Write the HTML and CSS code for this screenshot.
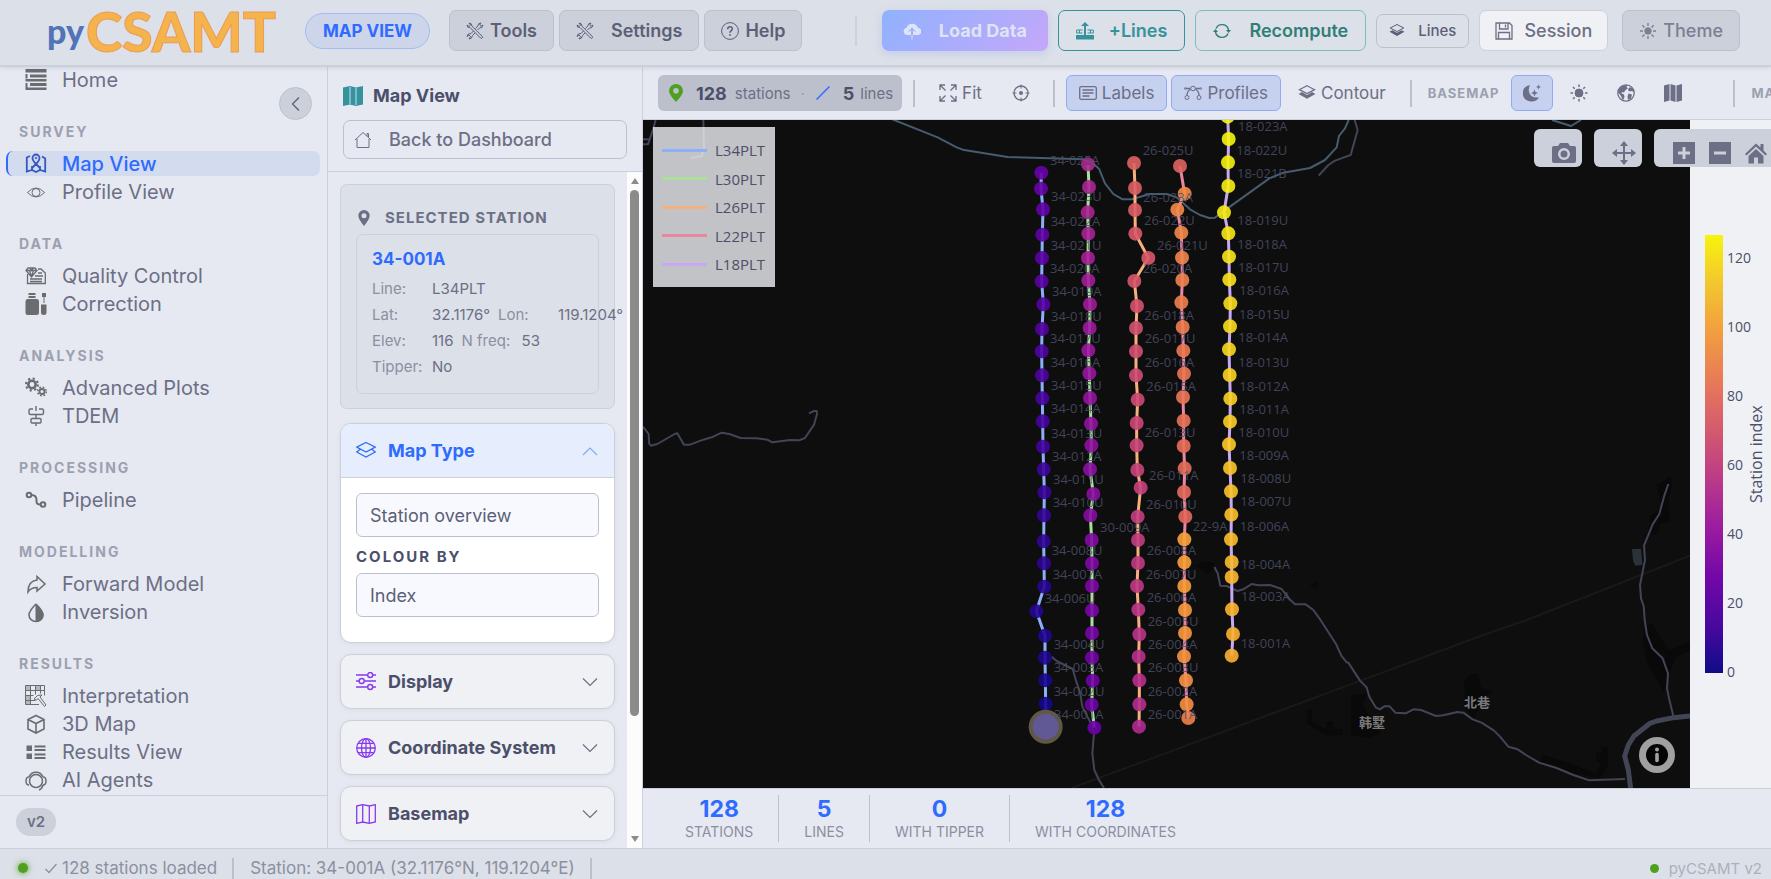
FILE: index.html
```html
<!DOCTYPE html>
<html lang="en">
<head>
<meta charset="utf-8">
<title>pyCSAMT – Map View</title>
<link rel="stylesheet" href="styles.css">
</head>
<body>
<div class="app">
  <header class="topbar">
    <a class="logo" href="#"><span class="logo-py">py</span><span class="logo-name">CSAMT</span></a>
    <span class="view-badge">MAP VIEW</span>
    <div class="menu">
      <button class="btn btn-menu"><svg class="i18" viewBox="0 0 18 18"><path d="M4 5.500 14.500 16q1 .8 1.700 0t0-1.700L6 4.200Q6 1 3 1L4.500 3 3.200 4.500 1 3q0 3 3 2.500M11.500 8l2-2q3 .5 3.500-3l-2 1.300L13.700 3 15 1q-3 0-3.200 3L9.500 6.500M7.500 9 5 11.500Q1.500 11 1 14.500L3 13l1.500 1.500L3 17q3 0 3.500-3.500L9 11"/></svg>Tools</button>
      <button class="btn btn-menu btn-wide"><svg class="i18" viewBox="0 0 18 18"><path d="M4 5.500 14.500 16q1 .8 1.700 0t0-1.700L6 4.200Q6 1 3 1L4.500 3 3.200 4.500 1 3q0 3 3 2.500M11.500 8l2-2q3 .5 3.500-3l-2 1.300L13.700 3 15 1q-3 0-3.200 3L9.500 6.500M7.500 9 5 11.500Q1.500 11 1 14.500L3 13l1.500 1.500L3 17q3 0 3.500-3.500L9 11"/></svg>Settings</button>
      <button class="btn btn-menu"><svg class="i18" viewBox="0 0 18 18"><circle cx="9" cy="9" r="8.400"/><path stroke-width="1.500" d="M6.600 7.200Q6.800 4.800 9 4.800t2.300 2q0 1.300-1.400 2.200-.9.600-.9 1.700"/><path stroke-width="1.800" d="M9 12.300v1.500"/></svg>Help</button>
    </div>
    <span class="topbar-sep"></span>
    <div class="actions">
      <button class="btn btn-load"><svg class="i18" viewBox="0 0 18 18"><path fill="currentColor" stroke="none" d="M4.500 13H8V8L6 10 5.300 9.300 9 5.600l3.700 3.700L12 10l-2-2v5h4.500A3.500 3.500 0 0 0 15 6 6 6 0 0 0 3.600 5.700 3.700 3.700 0 0 0 4.500 13M8.500 13h1v4.500h-1z"/></svg>Load Data</button>
      <button class="btn btn-lines"><svg class="i18" viewBox="0 0 18 18"><path fill="currentColor" stroke="none" d="M0 13h18v4.500H0zM8 4h2v9H8zM5 4l4-4 4 4z"/><path d="M6.500 8H.7v3h5.800M11.500 8h5.800v3h-5.800M3.500 8v3M14.500 8v3"/></svg>+Lines</button>
      <button class="btn btn-recompute"><svg class="i18" viewBox="0 0 18 18"><path stroke-width="1.400" d="M3 6.500A6.600 6.600 0 0 1 15.500 8M15 11.500A6.600 6.600 0 0 1 2.500 10"/><path fill="currentColor" stroke="none" d="M0 10h5L2.500 7zM13 8h5l-2.500 3z"/></svg>Recompute</button>
      <button class="btn btn-small"><svg class="i16" viewBox="0 0 16 16"><path d="M8 1.500 14.800 5 8 8.500 1.200 5z"/><path fill="currentColor" stroke="none" d="m3.500 7.200-3 1.600L8 13l7.500-4.200-3-1.600L8 9.700z"/></svg>Lines</button>
      <button class="btn btn-session"><svg class="i18" viewBox="0 0 18 18"><path stroke-width="1.300" d="M1 1h13.500L17 3.500V17H1zM4.500 1v6h8.500V1M3.500 17v-6.500h11V17M10.500 2.500v3"/></svg>Session</button>
      <button class="btn btn-theme"><svg class="i18" viewBox="0 0 18 18"><circle cx="9" cy="9" r="3.200" fill="currentColor"/><path stroke-width="1.400" d="M9 1v3M9 14v3M1 9h3M14 9h3M3.300 3.300l2.200 2.200M12.500 12.500l2.200 2.200M3.300 14.700l2.200-2.200M12.500 5.500l2.200-2.200"/></svg>Theme</button>
    </div>
  </header>

  <div class="body">
    <nav class="sidebar" aria-label="Main">
      <button class="collapse" aria-label="Collapse sidebar"><svg class="i16" viewBox="0 0 16 16"><path stroke-width="1.300" d="M11 1.500 4.500 8 11 14.500"/></svg></button>
      <div class="nav-scroll">
        <a class="nav-item" href="#"><svg class="nav-i" viewBox="0 0 22 22"><path stroke="none" fill="currentColor" d="M.5 0h21v3.500H.5zM.5 5h2v4.500H.5zM5 5.500h16.500v3H5zM.5 10h21v2.500H.5zM.5 14h2v5H.5zM5 14h16.500v3H5zM.5 18.500h21V21H.5z"/></svg>Home</a>

        <h2 class="nav-title">SURVEY</h2>
        <a class="nav-item active" href="#"><svg class="nav-i" viewBox="0 0 22 22"><path stroke-width="1.800" d="M5 3 1.800 4.500v14L7 17l4 2 4-2 5.200 1.500V5.500L17 3.500M7 13v4M15 13v4M11 12v-1M11 11Q7.500 7.500 7.500 5a3.500 3.500 0 0 1 7 0q0 2.500-3.500 6l4 4M11 11l-4 4"/><circle cx="11" cy="5" r=".8"/></svg>Map View</a>
        <a class="nav-item" href="#"><svg class="nav-i" viewBox="0 0 22 22"><path d="M2.500 11.500Q11 2.500 19.500 11.500 11 20.500 2.500 11.500"/><circle cx="11" cy="11.500" r="4"/></svg>Profile View</a>

        <h2 class="nav-title">DATA</h2>
        <a class="nav-item" href="#"><svg class="nav-i" viewBox="0 0 22 22"><path stroke-width="1.300" d="M2.500 9v9.500h17.800V8L16 4h-3M3 3h7l2 2.500L6.500 12 1 5.500zM1 5.500h11M4.500 5.500l2 6 2-6M5 3l1.500 2.500L8.500 3M10 11h8M5 14h12M5 16.500h12M13 8h4"/></svg>Quality Control</a>
        <a class="nav-item" href="#"><svg class="nav-i" viewBox="0 0 22 22"><path stroke="none" fill="currentColor" d="M3.500 0h7v2h-7zM3.500 3h7v2h-7zM2.500 6h9q2.500 0 2.500 2.500v11q0 2.500-2.500 2.500h-9Q.5 22 .5 19.500v-11Q.5 6 2.500 6M17 0h4v4h-1.500v6h-1V4H17zM16 11.500h5.500v8q0 2.500-2.700 2.500T16 19.500z"/></svg>Correction</a>

        <h2 class="nav-title">ANALYSIS</h2>
        <a class="nav-item" href="#"><svg class="nav-i" viewBox="0 0 22 22"><circle cx="7" cy="7.500" r="3.700" stroke-width="2.600"/><circle cx="7" cy="7.500" r="6" stroke-width="2" stroke-dasharray="2.200 2.500"/><circle cx="17" cy="14.500" r="2.500" stroke-width="1.800"/><circle cx="17" cy="14.500" r="4.300" stroke-width="1.600" stroke-dasharray="1.700 1.700"/></svg>Advanced Plots</a>
        <a class="nav-item" href="#"><svg class="nav-i" viewBox="0 0 22 22"><path stroke-width="1.400" d="M11 1v5M11 9.500v4M11 18v3M8 4H5.500Q4 4 4 5.500V8q0 1.500 1.500 1.500H17q1.500 0 1.500-1.500V5.500Q18.500 4 17 4h-3M7 13.500h8q1 0 1 1V17q0 1-1 1H7q-1 0-1-1v-2.500q0-1 1-1z"/></svg>TDEM</a>

        <h2 class="nav-title">PROCESSING</h2>
        <a class="nav-item" href="#"><svg class="nav-i" viewBox="0 0 22 22"><g stroke-width="2"><circle cx="4" cy="6" r="2.300"/><circle cx="18" cy="15.500" r="2.300"/><path d="M6.500 6q5 0 5 5v1.500q0 3 4 3"/></g></svg>Pipeline</a>

        <h2 class="nav-title">MODELLING</h2>
        <a class="nav-item" href="#"><svg class="nav-i" viewBox="0 0 22 22"><path stroke-width="1.500" d="M12 7V3.500L20 11l-8 7v-3.500q-6 0-9 4.500Q3 8 12 7z"/></svg>Forward Model</a>
        <a class="nav-item" href="#"><svg class="nav-i" viewBox="0 0 22 22"><path stroke-width="1.600" d="M11 3q-7 7-7 11a7 6.500 0 0 0 14 0q0-4-7-11"/><path fill="currentColor" d="M11 3q7 7 7 11a7 6.500 0 0 1-7 6.500z"/></svg>Inversion</a>

        <h2 class="nav-title">RESULTS</h2>
        <a class="nav-item" href="#"><svg class="nav-i" viewBox="0 0 22 22"><path fill="#b4b6bd" stroke="none" d="M1 1h5v5H1zM11 1h4v5h-4zM6 11H1v8h5z"/><path d="M.5.500h19v10M.5.500v19H14M5.500.500v19M10.500.500v9M15.500.500v8M.5 5.500h19M.5 10.500h8M.5 15.500h10"/><path d="M9 14q3-5 8-4l-2 2 6 8-1.500 1.500-6.500-8q-1 3-4 .5"/></svg>Interpretation</a>
        <a class="nav-item" href="#"><svg class="nav-i" viewBox="0 0 22 22"><path stroke-width="1.600" d="m11 2.500 8 4v9.500l-8 4-8-4V6.500zM3 6.500l8 4 8-4M11 10.500V20"/></svg>3D Map</a>
        <a class="nav-item" href="#"><svg class="nav-i" viewBox="0 0 22 22"><path stroke="none" fill="currentColor" d="M1.500 4.500H7V10H1.500zM1.500 12.500H7V18H1.500zM9.500 4.500h11v2h-11zM9.500 8h11v2h-11zM9.500 12.500h11v2h-11zM9.500 16h11v2h-11z"/></svg>Results View</a>
        <a class="nav-item" href="#"><svg class="nav-i" viewBox="0 0 22 22"><g stroke-width="1.500"><circle cx="11" cy="12" r="6.500"/><path d="M4 8q-3 0-3 4t3 4M18 8q3 0 3 4t-3 4M4 8a7.500 7.500 0 0 1 14 0M18 16q-1 4-4 5"/></g></svg>AI Agents</a>
      </div>
      <div class="nav-foot"><span class="version">v2</span></div>
    </nav>

    <aside class="panel">
      <div class="panel-head">
        <h1 class="panel-title"><svg class="i20" viewBox="0 0 20 20"><path stroke="none" fill="#36929b" d="M0 1.500 7 0l6 1.500L20 0v18.500L13 20l-6-1.500L0 20z"/><path stroke="#9cc9e8" stroke-width="1.400" d="M7 1v17M13 2v17"/></svg>Map View</h1>
        <button class="back"><svg class="i18" viewBox="0 0 18 18"><path d="M1 9 9 1.500 17 9M3 8v8.500h12V8M13 5V2.500h1.500v4"/></svg>Back to Dashboard</button>
      </div>
      <div class="panel-body">
        <div class="panel-list">
          <section class="selected">
            <h2 class="selected-title"><svg class="i16" viewBox="0 0 16 16"><path stroke="none" fill="currentColor" fill-rule="evenodd" d="M8 0a5.700 5.700 0 0 0-5.700 5.800Q2.300 9 8 16q5.700-7 5.700-10.200A5.700 5.700 0 0 0 8 0m0 3.200a2.500 2.500 0 1 1 0 5 2.500 2.500 0 0 1 0-5"/></svg>SELECTED STATION</h2>
            <div class="station">
              <strong class="station-name">34-001A</strong>
              <div class="row"><span class="key">Line:</span><span class="val">L34PLT</span></div>
              <div class="row"><span class="key">Lat:</span><span class="val">32.1176°</span><span class="key">Lon:</span><span class="val">119.1204°</span></div>
              <div class="row"><span class="key">Elev:</span><span class="val">116</span><span class="key">N freq:</span><span class="val">53</span></div>
              <div class="row"><span class="key">Tipper:</span><span class="val">No</span></div>
            </div>
          </section>
          <section class="acc open">
            <button class="acc-head"><svg class="i20" viewBox="0 0 20 20"><path stroke-width="1.300" d="m10 1.500 9.300 4.700L10 11 .7 6.200zM4 8.500.7 11l9.300 5 9.300-5L16 8.500"/></svg><span>Map Type</span><svg class="chev" viewBox="0 0 16 16"><path d="m1 12 7-7 7 7"/></svg></button>
            <div class="acc-body">
              <select class="field" aria-label="Map type"><option>Station overview</option></select>
              <label class="field-label" for="colour">COLOUR BY</label>
              <select class="field" id="colour"><option>Index</option></select>
            </div>
          </section>
          <section class="acc">
            <button class="acc-head"><svg class="i20" viewBox="0 0 20 20"><g stroke-width="1.400"><path d="M0 3h11.500M17 3h3M0 9h3M8.500 9H20M0 15h11.500M17 15h3"/><circle cx="14.200" cy="3" r="2.500"/><circle cx="5.700" cy="9" r="2.500"/><circle cx="14.200" cy="15" r="2.500"/></g></svg><span>Display</span><svg class="chev" viewBox="0 0 16 16"><path d="m1 4.500 7 7 7-7"/></svg></button>
          </section>
          <section class="acc">
            <button class="acc-head"><svg class="i20" viewBox="0 0 20 20"><g stroke-width="1.300"><circle cx="10" cy="10" r="9.300"/><ellipse cx="10" cy="10" rx="4.500" ry="9.300"/><path d="M10 .7v18.600M.7 10h18.600M2.200 5.300h15.600M2.200 14.700h15.600"/></g></svg><span>Coordinate System</span><svg class="chev" viewBox="0 0 16 16"><path d="m1 4.500 7 7 7-7"/></svg></button>
          </section>
          <section class="acc">
            <button class="acc-head"><svg class="i20" viewBox="0 0 20 20"><path stroke-width="1.300" d="m.7 2 6-1.300 6.600 1.300 6-1.300V18l-6 1.300L6.700 18l-6 1.300zM6.700.700V18M13.300 2v17.300"/></svg><span>Basemap</span><svg class="chev" viewBox="0 0 16 16"><path d="m1 4.500 7 7 7-7"/></svg></button>
          </section>
        </div>
        <div class="scroll" aria-hidden="true"><i class="arrow up"></i><i class="thumb"></i><i class="arrow down"></i></div>
      </div>
    </aside>

    <main class="main">
      <div class="toolbar">
        <div class="chip">
          <svg class="i18 pin" viewBox="0 0 18 18"><path stroke="none" fill="#50a020" fill-rule="evenodd" d="M9 0a7 7 0 0 0-7 7q0 3.500 7 11 7-7.500 7-11a7 7 0 0 0-7-7m0 4a2.800 2.800 0 1 1 0 5.600A2.800 2.800 0 0 1 9 4"/></svg>
          <b>128</b><span>stations</span><i>·</i>
          <svg class="i14" viewBox="0 0 14 14"><path stroke="#2f6bff" stroke-width="1.500" d="M.5 13.500 13.500.500"/></svg>
          <b class="num">5</b><span>lines</span>
        </div>
        <span class="tsep"></span>
        <button class="tool tool-fit"><svg class="i18" viewBox="0 0 18 18"><path stroke-width="1.300" d="M6.500 6.500 1 1M1 6V1h5M11.500 6.500 17 1M12 1h5v5M6.500 11.500 1 17M1 12v5h5M11.500 11.500 17 17M17 12v5h-5"/></svg>Fit</button>
        <button class="tool tool-icon" aria-label="Centre"><svg class="i18" viewBox="0 0 18 18"><circle cx="9" cy="9" r="7" stroke-width="1.300"/><circle cx="9" cy="9" r="2" fill="currentColor" stroke="none"/><path d="M9 .5v4M9 13.500v4M.5 9h4M13.500 9h4"/></svg></button>
        <span class="tsep"></span>
        <div class="toggles">
          <button class="tool on"><svg class="i18" viewBox="0 0 18 18"><rect x=".7" y="2.700" width="16.600" height="12.600" rx="1.500" stroke-width="1.300"/><path stroke-width="1.300" d="M3.500 6h11M3.500 9h11M3.500 12h7"/></svg>Labels</button>
          <button class="tool on"><svg class="i18" viewBox="0 0 18 18"><path stroke-width="1.300" d="M2 4.500h4.500M11.500 4.500H16M6.500 5.500Q3 7 3 11.500M11.500 5.500Q15 7 15 11.500"/><circle cx="9" cy="4.500" r="2.300"/><circle cx="3" cy="13.500" r="2"/><circle cx="15" cy="13.500" r="2"/><circle cx="1.200" cy="4.500" r=".8"/><circle cx="16.800" cy="4.500" r=".8"/></svg>Profiles</button>
          <button class="tool"><svg class="i18" viewBox="0 0 16 16"><path d="M8 1.500 14.800 5 8 8.500 1.200 5z"/><path fill="currentColor" stroke="none" d="m3.500 7.200-3 1.600L8 13l7.500-4.200-3-1.600L8 9.700z"/></svg>Contour</button>
        </div>
        <span class="tsep"></span>
        <span class="tlabel">BASEMAP</span>
        <div class="bases">
          <button class="tool tool-icon on" aria-label="Dark"><svg class="i18" viewBox="0 0 18 18"><path stroke="none" fill="currentColor" d="M7 1A8 8 0 0 0 9 17.500q4.500 0 7-4Q7 14.500 5.800 7 5.500 3.500 7 1M11.500 5.500 12.500 8l2.500 1-2.500 1-1 2.500-1-2.500L8 9l2.500-1zM15.500.500l.7 1.800 1.800.7-1.800.7-.7 1.800-.7-1.800L13 3l1.800-.7z"/></svg></button>
          <button class="tool tool-icon" aria-label="Light"><svg class="i18" viewBox="0 0 18 18"><circle cx="9" cy="9" r="4" fill="currentColor"/><path stroke-width="1.500" d="M9 .5v2.500M9 15v2.500M.5 9H3M15 9h2.500M3 3l1.700 1.700M13.300 13.300 15 15M3 15l1.700-1.700M13.300 4.700 15 3"/></svg></button>
          <button class="tool tool-icon" aria-label="Satellite"><svg class="i18" viewBox="0 0 18 18"><circle cx="9" cy="9" r="8.200" stroke-width="1.300"/><path stroke="none" fill="currentColor" d="M3 4q3-3.500 7.500-3l-1 2L11 4.500 8.500 6l-1.500 2.500L5 8l-.5 1.500 2.500 1 .5 2.500-1.500 3.500L4 12 1 8zM12 3.500l3.500.5 1.500 4-2-1-2.500.5L11 6zM11.500 9.500l3.500 1-1 4-3 1.500-.5-3.500z"/></svg></button>
          <button class="tool tool-icon" aria-label="Streets"><svg class="i18" viewBox="0 0 18 18"><path stroke="none" fill="currentColor" d="M0 1.500 5.500 0v16.500L0 18zM6.500 0l5 1.500V18l-5-1.500zM12.500 1.500 18 0v16.500L12.500 18z"/></svg></button>
        </div>
        <span class="tsep"></span>
        <span class="tlabel">MAP</span>
      </div>

      <div class="plot">
        <svg class="map" viewBox="643 120 1047 668" preserveAspectRatio="xMinYMin slice" role="img" aria-label="Station map">
          <rect x="643" y="120" width="1047" height="668" fill="#0e0e0e"/>
          <g id="ground"></g>
          <g id="profiles"></g>
          <g id="labels"></g>
          <g id="points"></g>
        </svg>
        <div class="colorbar">
          <div class="bar"></div>
          <ol class="ticks"><li>120</li><li>100</li><li>80</li><li>60</li><li>40</li><li>20</li><li>0</li></ol>
          <div class="bar-title">Station index</div>
        </div>
        <ul class="legend">
          <li><i class="l34"></i>L34PLT</li><li><i class="l30"></i>L30PLT</li><li><i class="l26"></i>L26PLT</li><li><i class="l22"></i>L22PLT</li><li><i class="l18"></i>L18PLT</li>
        </ul>
        <div class="modebar">
          <div class="group"><button aria-label="Download"><svg viewBox="0 0 24 24"><path fill-rule="evenodd" d="M8 2h8l2 3h4q2 0 2 2v13q0 2-2 2H2q-2 0-2-2V7q0-2 2-2h4zm4 5a6 6 0 1 0 0 12 6 6 0 0 0 0-12m0 2.500a3.500 3.500 0 1 1 0 7 3.500 3.500 0 0 1 0-7"/></svg></button></div>
          <div class="group"><button aria-label="Pan"><svg viewBox="0 0 24 24"><path d="m12 0 4 5h-3v6h6V8l5 4-5 4v-3h-6v6h3l-4 5-4-5h3v-6H5v3l-5-4 5-4v3h6V5H8z"/></svg></button></div>
          <div class="group last"><button aria-label="Zoom in"><svg viewBox="0 0 24 24"><path fill-rule="evenodd" d="M1 1h22v22H1zM10.500 6v4.500H6v3h4.500V18h3v-4.500H18v-3h-4.500V6z"/></svg></button><button aria-label="Zoom out"><svg viewBox="0 0 24 24"><path fill-rule="evenodd" d="M1 1h22v22H1zM6 10.500v3h12v-3z"/></svg></button><button aria-label="Reset view"><svg viewBox="0 0 24 24"><path d="M12 2.500 1 13l1.500 1.500L12 5.500l9.500 9L23 13l-3.500-3.500V3h-3v3.500zM12 8l-7.500 7v7.500h5.500v-6h4v6h5.500V15z"/></svg></button></div>
        </div>
        <button class="info" aria-label="Attribution"><svg viewBox="0 0 36 36"><circle cx="18" cy="18" r="18" fill="#a0a0a0"/><circle cx="18" cy="18" r="11" fill="#050505"/><circle cx="18" cy="12.500" r="2" fill="#a0a0a0"/><path d="M18 17.500v6" stroke="#a0a0a0" stroke-width="3.600" stroke-linecap="round"/></svg></button>
      </div>

      <div class="stats">
        <div class="stat"><b>128</b><span>STATIONS</span></div>
        <div class="stat"><b>5</b><span>LINES</span></div>
        <div class="stat"><b>0</b><span>WITH TIPPER</span></div>
        <div class="stat"><b>128</b><span>WITH COORDINATES</span></div>
      </div>
    </main>
  </div>

  <footer class="status">
    <i class="dot glow"></i>
    <span class="status-msg"><svg class="i14" viewBox="0 0 14 14"><path stroke-width="1.300" d="M1.500 8 5 11.500 12.500 3"/></svg>128 stations loaded</span>
    <span class="status-msg">Station: 34-001A (32.1176°N, 119.1204°E)</span>
    <span class="brand"><i class="dot"></i>pyCSAMT v2</span>
  </footer>
</div>
<script src="map.js"></script>
</body>
</html>
```
FILE: styles.css
```css
* { box-sizing: border-box; }
html, body { height: 100%; }
body { margin: 0; overflow: hidden; font-family: Inter, "Liberation Sans", sans-serif; color: #4c4f69; background: #e6e9f1; }
button, select { font: inherit; color: inherit; cursor: pointer; }
button { margin: 0; border: 1px solid transparent; background: none; }
a { color: inherit; text-decoration: none; }
h1, h2, ol, ul { margin: 0; padding: 0; list-style: none; }
svg { display: block; flex: none; fill: none; stroke: currentColor; }
.i14 { width: 14px; height: 14px; }
.i16 { width: 16px; height: 16px; }
.i18 { width: 18px; height: 18px; }
.i20 { width: 20px; height: 20px; }

.app { height: 100vh; display: flex; flex-direction: column; }

/* Top bar */
.topbar { position: relative; z-index: 2; flex: none; height: 67px; padding: 0 31px 4px 47px; display: flex; align-items: center; background: #dce0e8; border-bottom: 2px solid #ccd0da; box-shadow: 0 1px 4px rgba(76, 79, 105, .15); white-space: nowrap; }
.logo { flex: none; display: flex; align-items: center; width: 234px; font-family: Lato, sans-serif; font-weight: 900; line-height: 60px; }
.logo-py { width: 39px; color: #5273b8; font-size: 34px; }
.logo-name { color: #f4b44b; font-size: 55px; -webkit-text-stroke: 1px #ec9a5a; }
.view-badge { margin-left: 24px; height: 36px; padding: 0 17px; border: 1px solid #a5bcf2; border-radius: 18px; background: #ccd5ea; color: #2f6bff; font-size: 17px; font-weight: 700; line-height: 34px; }
.menu { display: flex; gap: 5px; margin-left: 19px; }
.btn { display: flex; align-items: center; height: 41px; padding: 0 17px; border-radius: 7px; font-size: 18px; font-weight: 600; }
.btn-menu { gap: 6px; padding: 0 16px; background: #ccd0da; border-color: #bcc0cc; color: #5c5f77; }
.btn-wide { gap: 17px; }
.topbar-sep { width: 2px; height: 30px; margin-left: 53px; background: #ccd0da; }
.actions { display: flex; align-items: center; gap: 10px; margin-left: auto; }
.btn-load { gap: 18px; padding: 0 21px; border: 0; background: linear-gradient(135deg, #8fb2ff, #c5a7f9); color: #dfe4f4; font-weight: 700; box-shadow: 0 3px 10px rgba(100, 130, 240, .2); }
.btn-lines { gap: 15px; border-color: #36929b; color: #36929b; }
.btn-recompute { gap: 18px; border-color: #7fbcc0; color: #2f7f78; }
.btn-small { gap: 13px; height: 34px; padding: 0 12px; border-color: #bcc0cc; font-size: 15px; font-weight: 500; color: #5c5f77; }
.btn-session { gap: 11px; padding: 0 15px; background: #eff1f5; border-color: #ccd0da; color: #6c6f85; font-weight: 500; }
.btn-theme { gap: 6px; margin-left: 4px; padding: 0 16px; background: #ccd0da; border-color: #bcc0cc; color: #7c7f93; font-weight: 500; }

.body { flex: 1; min-height: 0; display: flex; }

/* Sidebar */
.sidebar { position: relative; width: 328px; flex: none; display: flex; flex-direction: column; border-right: 1px solid #ccd0da; }
.collapse { position: absolute; top: 20px; right: 15px; width: 33px; height: 33px; padding: 0; display: grid; place-items: center; border-radius: 50%; border-color: #bcc0cc; background: #ccd0da; color: #5c5f77; }
.nav-scroll { flex: 1; min-height: 0; overflow: hidden; padding: 0 7px 0 6px; }
.nav-title { margin: 32px 0 12px 13px; font-size: 14px; line-height: 15px; font-weight: 700; letter-spacing: 2px; color: #9ca0b0; }
.nav-item { display: flex; align-items: center; height: 25px; margin-bottom: 3px; padding-left: 17px; gap: 15px; border-left: 2px solid transparent; border-radius: 7px; font-size: 20px; color: #6c6f85; }
.nav-i { width: 22px; height: 22px; color: #6b6c70; }
.nav-item.active { background: #d3dbee; border-left-color: #2f6bff; color: #2f6bff; font-weight: 500; }
.active .nav-i { color: #3558c0; }
.nav-foot { flex: none; height: 53px; padding: 12px 16px; border-top: 1px solid #ccd0da; }
.version { display: inline-block; padding: 0 11px; border-radius: 14px; background: #ccd0da; font-size: 15px; line-height: 28px; font-weight: 600; color: #6c6f85; }

/* Settings panel */
.panel { width: 315px; flex: none; display: flex; flex-direction: column; border-right: 1px solid #ccd0da; }
.panel-head { flex: none; height: 105px; padding: 18px 15px 0; border-bottom: 1px solid #ccd0da; }
.panel-title { display: flex; align-items: center; gap: 10px; font-size: 18px; line-height: 22px; font-weight: 700; }
.back { display: flex; align-items: center; gap: 17px; width: 100%; height: 39px; margin-top: 13px; padding: 0 10px; border-color: #bcc0cc; border-radius: 7px; font-size: 18px; font-weight: 500; color: #6c6f85; }
.panel-body { flex: 1; min-height: 0; display: flex; overflow: hidden; }
.panel-list { flex: 1; min-width: 0; padding: 12px 12px 0 12px; overflow: hidden; }
.selected { height: 225px; padding: 23px 15px 15px; border: 1px solid #ccd0da; border-radius: 7px; background: #dce0e8; }
.selected-title { display: flex; align-items: center; gap: 13px; font-size: 15px; line-height: 20px; font-weight: 700; letter-spacing: 1px; color: #6c6f85; white-space: nowrap; }
.station { height: 160px; margin-top: 6px; padding: 13px 15px; border: 1px solid #ccd0da; border-radius: 7px; }
.station-name { display: block; margin-bottom: 6px; font-size: 17px; line-height: 22px; color: #2f6bff; }
.row { display: flex; white-space: nowrap; font-size: 15px; line-height: 26px; }
.key { flex: none; width: 60px; color: #8c8fa1; }
.val { margin-right: 8px; color: #6c6f85; }
.acc { margin-top: 11px; border: 1px solid #ccd0da; border-radius: 11px; background: #eff1f5; overflow: hidden; box-shadow: 0 1px 4px rgba(76, 79, 105, .08); }
.acc.open { margin-top: 14px; background: #fff; }
.acc-head { display: flex; align-items: center; gap: 12px; width: 100%; height: 53px; padding: 0 16px 0 15px; border: 0; font-size: 18px; font-weight: 700; text-align: left; }
.acc-head span { flex: 1; white-space: nowrap; }
.acc-head .i20 { color: #8839ef; }
.open .acc-head { height: 54px; border-bottom: 1px solid #ccd0da; background: #e6edfc; color: #2f6bff; }
.open .acc-head .i20 { color: #2f6bff; }
.chev { width: 16px; height: 16px; color: #6c6f85; stroke-width: 1.2; }
.open .chev { color: #7fabf5; }
.acc-body { padding: 15px 15px 25px; }
.field { display: block; width: 100%; height: 44px; padding: 0 13px; appearance: none; border: 1px solid #bcc0cc; border-radius: 6px; background: #f8f9fe; font-size: 18px; color: #5c5f77; }
.field-label { display: block; margin: 10px 0 6px; font-size: 15px; line-height: 20px; font-weight: 700; letter-spacing: 2px; }
.scroll { flex: none; width: 15px; display: flex; flex-direction: column; align-items: center; padding: 6px 0; background: #fcfcfc; }
.thumb { width: 9px; flex: 0 1 526px; margin-top: 6px; border-radius: 5px; background: #8b8b8b; }
.arrow { border: 4px solid transparent; }
.arrow.up { border-top: 0; border-bottom: 6px solid #8b8b8b; }
.arrow.down { margin-top: auto; border-bottom: 0; border-top: 6px solid #8b8b8b; }

/* Map toolbar */
.main { flex: 1; min-width: 0; display: flex; flex-direction: column; }
.toolbar { flex: none; height: 53px; padding: 0 0 0 15px; display: flex; align-items: center; overflow: hidden; border-bottom: 1px solid #ccd0da; white-space: nowrap; color: #6c6f85; }
.chip { flex: none; display: flex; align-items: center; height: 36px; padding: 0 9px; border-radius: 6px; background: #bcc0cc; font-size: 15px; }
.chip b { margin: 0 8px 0 11px; font-size: 18px; color: #4c4f69; }
.chip .num { margin-right: 6px; margin-left: 13px; }
.chip i { margin: 0 11px 0 10px; color: #9ca0b0; font-style: normal; }
.tsep { flex: none; width: 2px; height: 27px; background: #bcc0cc; margin: 0 11px; }
.tool { flex: none; display: flex; align-items: center; gap: 5px; height: 36px; padding: 0 12px; border-radius: 6px; font-size: 17px; }
.tool-icon { padding: 0 11px; }
.tool.on { background: #c5d1ef; border-color: #8fabf3; }
.tool-fit { margin-right: 5px; }
.toggles { flex: none; display: flex; gap: 4px; }
.bases { flex: none; display: flex; gap: 5px; margin: 0 28px 0 12px; }
.tlabel { flex: none; margin-left: 5px; font-size: 13px; font-weight: 700; letter-spacing: 1px; color: #9ca0b0; }

/* Plot */
.plot { position: relative; flex: 1; min-height: 0; display: flex; background: #eff1f5; overflow: hidden; }
.map { flex: 1; min-width: 0; width: 0; height: 100%; stroke: none; font-family: "Open Sans", "Noto Sans CJK SC", sans-serif; }
.colorbar { flex: none; width: 81px; height: 553px; padding: 115px 0 0 15px; display: flex; font-family: "Open Sans", sans-serif; font-size: 15px; color: #4c4f69; }
.bar { width: 18px; background: linear-gradient(to top, #100b88, #4a08a0, #7308a8, #9b1c9f, #bb3b88, #d45a6e, #e87a58, #f29d40, #f3c62f, #f7f40c); }
.ticks { width: 30px; margin: 13px 0 -9px 4px; display: flex; flex-direction: column; justify-content: space-between; line-height: 20px; font-size: 14px; }
.bar-title { writing-mode: vertical-rl; rotate: 180deg; text-align: center; line-height: 14px; font-size: 16px; margin-left: -8px; }
.legend { position: absolute; left: 10px; top: 7px; width: 122px; height: 160px; padding: 9px; display: flex; flex-direction: column; justify-content: space-between; background: rgba(239, 241, 245, .8); font: 15px/28px "Open Sans", sans-serif; }
.legend li { display: flex; align-items: center; gap: 8px; }
.legend i { width: 45px; height: 3px; }
.l34 { background: #8cb0f8; }
.l30 { background: #a9e09a; }
.l26 { background: #f5b07e; }
.l22 { background: #ea86a0; }
.l18 { background: #c6a8f5; }
.modebar { position: absolute; top: 9px; right: 0; display: flex; gap: 12px; }
.group { display: flex; gap: 12px; height: 38px; padding: 12px 6px 0 18px; border-radius: 6px; background: #ccd0da; }
.group.last { padding-right: 3px; border-radius: 6px 0 0 6px; }
.group button { width: 24px; height: 24px; padding: 0; border: 0; }
.group svg { width: 24px; height: 24px; fill: #6c6f85; stroke: none; }
.info { position: absolute; right: 96px; bottom: 15px; width: 36px; height: 36px; padding: 0; border: 0; }
.info svg { stroke: none; }

.stats { flex: none; height: 60px; padding: 6px 17px; display: flex; border-top: 1px solid #ccd0da; }
.stat { display: flex; flex-direction: column; align-items: center; padding: 0 25px; border-right: 1px solid #bcc0cc; }
.stat:last-child { border: 0; }
.stat b { font-size: 23px; line-height: 28px; color: #2f6bff; }
.stat span { font-size: 14px; line-height: 18px; color: #8c8fa1; }

/* Status bar */
.status { flex: none; height: 31px; padding: 8px 9px 0 18px; display: flex; align-items: center; overflow: hidden; border-top: 1px solid #ccd0da; background: #dce0e8; font-size: 17px; color: #8c8fa1; white-space: nowrap; }
.dot { width: 9px; height: 9px; border-radius: 50%; background: #50a020; }
.dot.glow { width: 10px; height: 10px; margin-right: 16px; box-shadow: 0 0 6px #50a020; }
.status-msg { display: flex; align-items: center; gap: 4px; height: 21px; margin-right: 16px; padding-right: 15px; border-right: 2px solid #bcc0cc; }
.brand { margin-left: auto; display: flex; align-items: center; gap: 10px; font-size: 15px; color: #acb0be; }
```
FILE: map.js
```js
const NS = 'http://www.w3.org/2000/svg';
const plasma = ['0d0887', '46039f', '7201a8', '9c179e', 'bd3786', 'd8576b', 'ed7953', 'fb9f3a', 'fdca26', 'f5f90c']
  .map(h => [0, 2, 4].map(i => parseInt(h.slice(i, i + 2), 16)));

function colour(index) {
  const t = index / 127 * 9;
  const k = Math.min(8, Math.floor(t));
  return 'rgb(' + plasma[k].map((c, i) => Math.round(c + (plasma[k + 1][i] - c) * (t - k))) + ')';
}

function add(parent, name, attrs, text) {
  const el = document.createElementNS(NS, name);
  for (const key in attrs) el.setAttribute(key, attrs[key]);
  if (text) el.textContent = text;
  document.getElementById(parent).appendChild(el);
}

// Survey geometry is stored at three units per map unit, relative to each tile's origin.
const at = (ox, oy, list) => list.map(([x, y, ...rest]) => [ox + x / 3, oy + y / 3, ...rest]);
const N = list => at(1000, 110, list);
const S = list => at(1000, 440, list);
const W = list => at(640, 110, list);
const E = list => at(1340, 440, list);

function line(points, stroke, width) {
  add('ground', 'polyline', { points: points.map(p => p.join(',')).join(' '), fill: 'none', stroke, 'stroke-width': width, 'stroke-linejoin': 'round' });
}
function area(points, fill) {
  add('ground', 'polygon', { points: points.map(p => p.join(',')).join(' '), fill });
}

const road = '#424556', river = '#465c70';
area(E([[33, 765], [85, 760], [68, 790], [85, 825], [130, 845], [120, 880], [90, 895], [33, 885]]), '#090909');
area(E([[373, 725], [390, 702], [414, 702], [425, 745], [458, 752], [430, 775], [400, 840], [375, 800]]), '#090909');
area(E([[610, 945], [690, 970], [765, 1000], [785, 970], [768, 960], [768, 938], [785, 938], [785, 922], [804, 922], [804, 980], [780, 1015], [700, 1000], [600, 970]]), '#090909');
area(E([[935, 548], [985, 630], [1050, 605], [1050, 630], [1005, 655], [970, 755], [920, 665], [908, 600], [915, 560]]), '#090909');
area(E([[950, 135], [990, 110], [998, 125], [985, 180], [990, 245], [965, 250], [950, 285], [925, 280], [930, 230], [965, 200]]), '#090909');
area(S([[590, 375], [610, 365], [640, 370], [645, 385], [620, 403]]), '#090909');
area(S([[920, 850], [923, 808], [936, 808], [936, 845], [978, 868], [978, 845], [998, 843], [1000, 866], [1028, 868], [1028, 886], [978, 886]]), '#090909');
area(S([[930, 435], [955, 425], [955, 440], [945, 450]]), '#090909');
area(E([[876, 327], [903, 327], [907, 375], [886, 377], [879, 362]]), '#2b3339');
line([...S([[215, 1044], [415, 970]]), ...E([[0, 745], [430, 585], [560, 540], [1050, 347]])], '#191919', 2);
line([...W([[757, 28], [893, 82], [950, 112], [968, 119], [1103, 141]]), ...N([[20, 141], [250, 148], [275, 157], [297, 176], [315, 220], [340, 252], [368, 268], [395, 268], [450, 252], [500, 252], [530, 262], [570, 298], [600, 315], [628, 324], [645, 323], [660, 312], [690, 290], [808, 205], [850, 188], [930, 174], [975, 150], [1010, 112], [1017, 78], [1035, 55], [1046, 30]])], river, 2);
line([[1552, 120], [1571, 126], [1581, 120]], river, 2);
line(N([[1064, 30], [1073, 60], [1052, 135], [1005, 152], [985, 165], [956, 197]]), road, 2);
line(W([[47, 30], [38, 62], [24, 103], [9, 103]]), road, 2);
line(W([[9, 88], [29, 88]]), road, 2);
line(W([[190, 30], [192, 115], [185, 138], [150, 145]]), road, 2);
line(W([[9, 950], [26, 972], [27, 1000], [33, 1007], [52, 1002], [104, 972], [112, 970], [132, 1004], [150, 1004], [190, 989], [215, 982], [245, 968], [268, 972], [302, 984], [350, 985], [382, 989], [397, 997], [450, 990], [477, 991], [495, 984], [522, 944], [531, 912], [530, 903], [522, 903], [507, 910]]), road, 2);
line(S([[155, 650], [170, 663], [218, 687], [228, 722], [240, 757], [247, 800], [270, 845], [282, 880], [277, 940], [283, 990], [297, 1020], [312, 1044]]), road, 2);
line([...S([[643, 381], [653, 400], [661, 437], [680, 438], [712, 453], [730, 448], [755, 432], [775, 436], [810, 435], [845, 447], [866, 475], [885, 493], [917, 493], [940, 510], [963, 542], [1008, 612], [1024, 647], [1040, 667]]), ...E([[25, 668], [60, 722], [80, 742], [88, 770], [107, 802], [120, 808], [133, 799], [149, 799], [166, 818], [197, 820], [220, 808], [243, 810], [288, 828], [310, 826], [352, 816], [370, 818], [398, 838], [425, 848], [462, 872], [480, 890], [505, 920], [533, 928], [558, 945], [597, 968], [650, 984], [700, 1005], [748, 1021], [855, 1017]])], road, 2);
line(E([[1050, 828], [1000, 833], [950, 843], [930, 850], [882, 888], [865, 915], [854, 948], [865, 990], [872, 1046]]), road, 5);
line(E([[985, 132], [972, 170], [958, 222], [938, 253], [912, 317], [915, 360], [908, 395], [900, 435], [903, 475], [911, 498], [914, 540], [921, 585], [937, 625], [968, 655], [984, 700], [981, 745], [987, 775], [1000, 828]]), road, 2);
add('ground', 'text', { x: 1359, y: 727, 'font-size': 13, 'font-weight': 700, fill: '#7a7a7a' }, '韩墅');
add('ground', 'text', { x: 1464, y: 707, 'font-size': 13, 'font-weight': 700, fill: '#7a7a7a' }, '北巷');

const down = (from, n) => Array.from({ length: n }, (_, i) => from - i);
const profiles = [
  { stroke: '#8cb0f8', index: down(25, 26), pts: [...N([[124, 188], [123, 236], [129, 298], [127, 374], [126, 444], [125, 514], [130, 583], [126, 657], [125, 724], [126, 796], [127, 865], [128, 934], [129, 1010]]), ...S([[131, 88], [133, 157], [132, 226], [131, 304], [132, 370], [133, 440], [109, 514], [135, 587], [135, 653], [136, 721], [137, 791], [137, 860]])] },
  { stroke: '#a9e09a', index: down(50, 25), pts: [...N([[264, 163], [267, 231], [263, 307], [265, 371], [264, 444], [265, 511], [270, 583], [269, 654], [265, 721], [268, 790], [270, 864], [273, 941], [274, 1006]]), ...S([[270, 88], [280, 162], [271, 226], [275, 300], [276, 370], [276, 438], [276, 511], [276, 579], [276, 653], [278, 722], [275, 794], [283, 863]])] },
  { stroke: '#f5b07e', index: down(75, 25), pts: [...N([[402, 159], [405, 234], [405, 300], [406, 371], [445, 444], [403, 513], [411, 588], [408, 654], [408, 724], [408, 796], [413, 869], [410, 939], [410, 1006]]), ...S([[412, 90], [422, 143], [413, 230], [414, 300], [414, 369], [411, 438], [415, 509], [418, 583], [416, 650], [418, 721], [418, 793], [417, 860]])] },
  { stroke: '#ea86a0', index: [76, ...down(92, 15), ...down(100, 8), 88], pts: [...N([[540, 168], [554, 251], [532, 299], [544, 368], [546, 443], [547, 510], [544, 577], [548, 651], [550, 722], [552, 791], [549, 861], [551, 932], [551, 1008]]), ...S([[554, 85], [552, 156], [556, 230], [553, 298], [553, 367], [553, 438], [555, 510], [555, 579], [552, 649], [558, 721], [560, 793], [565, 834]])] },
  { stroke: '#c6a8f5', index: down(127, 27), pts: [...N([[683, 20], [686, 87], [684, 157], [685, 228], [672, 307], [685, 370], [687, 440], [688, 509], [691, 580], [690, 649], [687, 718], [689, 795], [691, 866], [690, 935], [687, 1003]]), ...S([[690, 84], [693, 154], [694, 224], [693, 298], [695, 366], [695, 411], [696, 508], [699, 582], [695, 647]])] },
];
for (const p of profiles) {
  add('profiles', 'polyline', { points: p.pts.map(q => q.join(',')).join(' '), fill: 'none', stroke: p.stroke, 'stroke-width': 3 });
  p.pts.forEach(([cx, cy], i) => add('points', 'circle', { cx, cy, r: 7, fill: colour(p.index[i]), opacity: 0.9 }));
}
const [sx, sy] = profiles[0].pts[24];
add('points', 'circle', { cx: sx, cy: sy, r: 15, fill: '#605996', stroke: '#605845', 'stroke-width': 4 });

const names = [
  ...N([[150, 151, '34-025A'], [153, 259, '34-023U'], [152, 334, '34-022A'], [152, 405, '34-021U'], [150, 475, '34-020A'], [156, 544, '34-019A'], [153, 617, '34-018U'], [150, 685, '34-017U'], [152, 756, '34-016A'], [153, 826, '34-015U'], [153, 895, '34-014A'], [154, 970, '34-013U'], [156, 1037, '34-012A'],
    [428, 119, '26-025U'], [430, 261, '26-023A'], [432, 331, '26-022U'], [471, 405, '26-021U'], [428, 475, '26-020A'], [433, 615, '26-018A'], [434, 685, '26-017U'], [434, 756, '26-016A'], [439, 829, '26-015A'], [434, 966, '26-013U'],
    [714, 49, '18-023A'], [709, 119, '18-022U'], [711, 189, '18-021B'], [712, 331, '18-019U'], [712, 401, '18-018A'], [714, 470, '18-017U'], [718, 541, '18-016A'], [717, 611, '18-015U'], [715, 681, '18-014A'], [715, 755, '18-013U'], [718, 827, '18-012A'], [718, 896, '18-011A'], [715, 965, '18-010U'], [718, 1034, '18-009A']]),
  ...S([[159, 117, '34-011U'], [158, 186, '34-010U'], [155, 330, '34-008U'], [158, 401, '34-007A'], [134, 475, '34-006U'], [161, 613, '34-004U'], [161, 682, '34-003A'], [161, 753, '34-002U'], [162, 821, '34-001A'], [300, 262, '30-009A'], [578, 259, '22-9A'],
    [447, 104, '26-011A'], [438, 191, '26-010U'], [440, 330, '26-008A'], [437, 401, '26-007U'], [440, 470, '26-006A'], [443, 544, '26-005U'], [443, 612, '26-004A'], [443, 682, '26-003U'], [443, 753, '26-002A'], [443, 822, '26-001A'],
    [721, 114, '18-008U'], [721, 184, '18-007U'], [719, 259, '18-006A'], [722, 371, '18-004A'], [723, 469, '18-003A'], [722, 608, '18-001A']]),
];
for (const [x, y, name] of names) {
  add('labels', 'text', { x, y: y + 5, 'font-size': 13, fill: '#4c4f69', 'fill-opacity': 0.85 }, name);
}
// Labels stay readable where they cross the markers.
document.querySelector('.map').appendChild(document.getElementById('labels'));
```
